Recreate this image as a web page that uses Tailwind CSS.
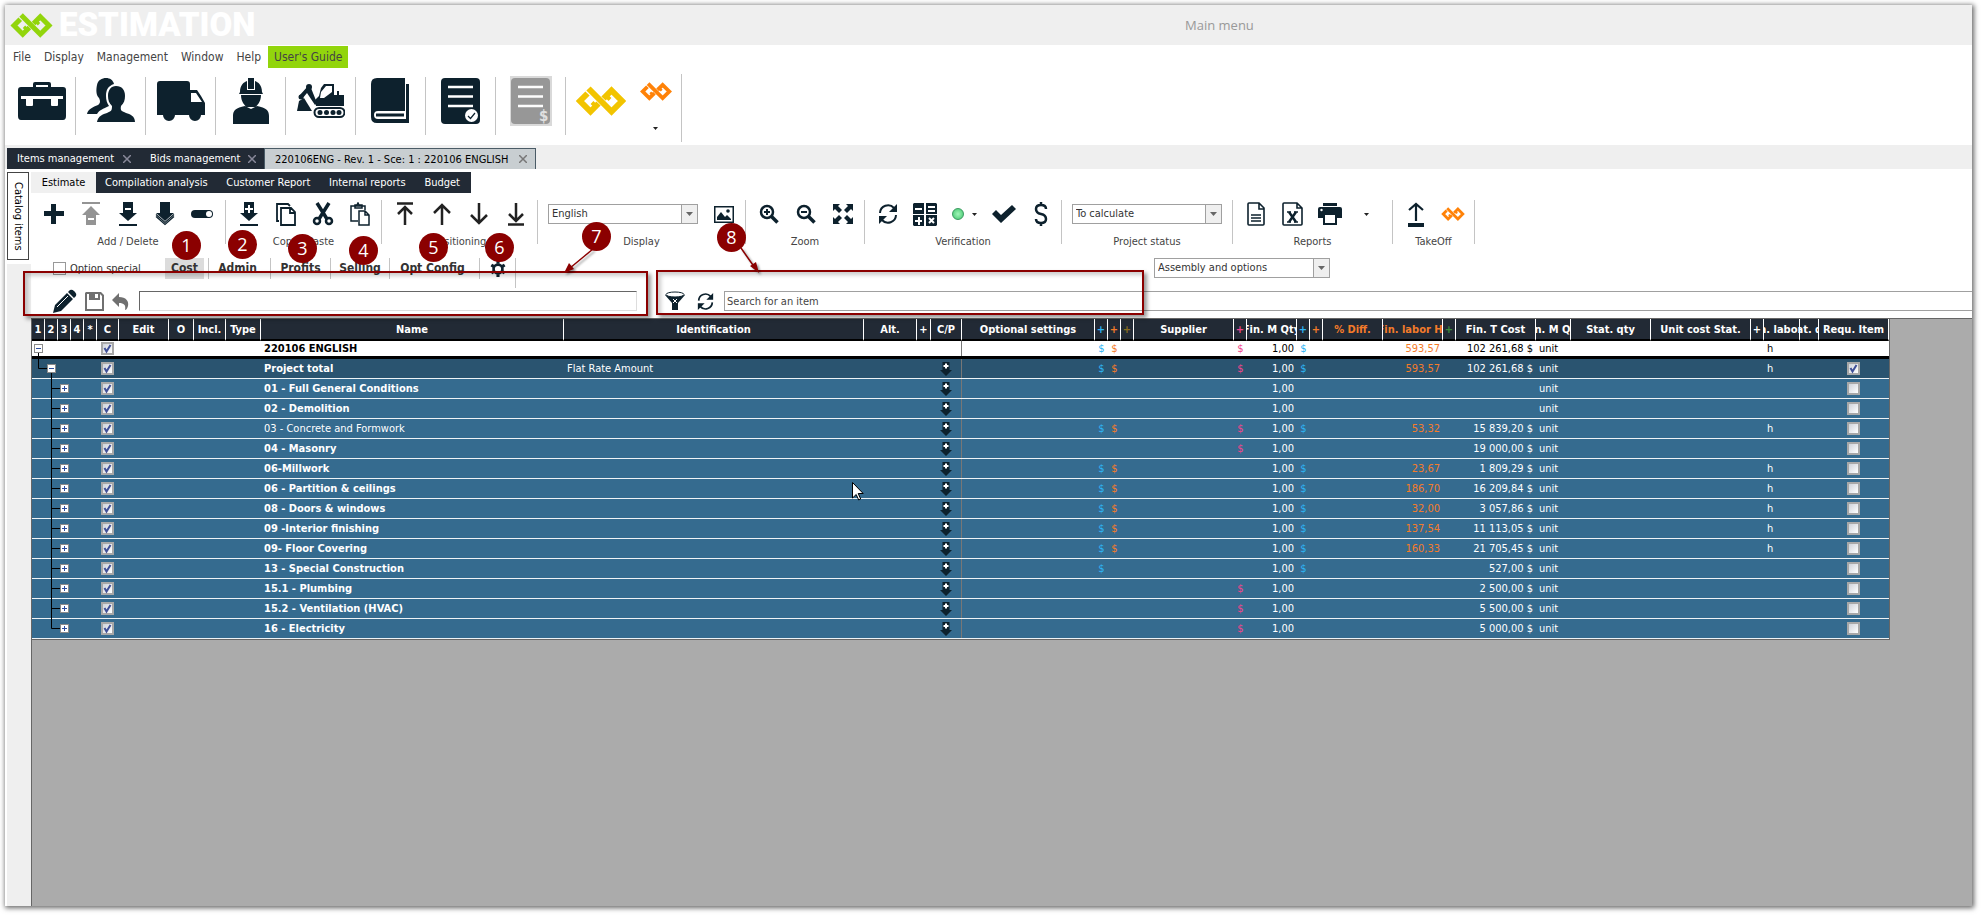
<!DOCTYPE html>
<html lang="en">
<head>
<meta charset="utf-8">
<title>Estimation</title>
<script src="https://cdn.jsdelivr.net/npm/@tailwindcss/browser@4"></script>
</head>
<body class="bg-white font-['DejaVu_Sans_Condensed','Noto_Sans',sans-serif] text-[11px] leading-4 text-[#333]">

<svg class="hidden" aria-hidden="true">
  <symbol id="logo" viewBox="0 0 50 30"><g fill="none" stroke="currentColor" stroke-width="6"><path d="M12.500 2.500L35.500 25.500L46 15L35.500 4.500L27.500 12.500"/><path d="M22.500 17.500L14.500 25.500L4 15L11.500 7.500"/><path d="M20.500 21L16 16.500M29.500 9L34 13.500" stroke-width="4"/></g></symbol>
  <symbol id="case" viewBox="0 0 48 40"><path fill-rule="evenodd" d="M15 6V3q0-2 2-2h14q2 0 2 2v3h12q3 0 3 3v26q0 4-3 4H3q-3 0-3-4V9q0-3 3-3zM18 6h12V4H18zM3 15v3h5v6q0 1 1 1h5q1 0 1-1v-6h18v6q0 1 1 1h5q1 0 1-1v-6h5v-3z"/></symbol>
  <symbol id="people" viewBox="0 0 48 44"><path d="M0 36c1-5 6-7 11-9 3-2 2-5 1-7-3-3-3-8-2-13C11 2 15 0 19 0c4 0 7 2 8 6-6 2-8 6-8 12 0 4 1 7 3 10-6 3-10 4-12 8z"/><path d="M29 8c6 0 9 4 9 10 0 4-1 7-4 10-1 5 1 5 5 7 4 1 9 3 9 9H10c1-6 6-8 10-9 4-2 5-2 5-7-3-3-4-6-4-10 0-6 3-10 8-10z"/></symbol>
  <symbol id="truck" viewBox="0 0 48 40"><path fill-rule="evenodd" d="M3 0h27q3 0 3 3v6h7l4 6 4 7v12h-4a6 6 0 0 1-12 0H18a6 6 0 0 1-12 0H0V3q0-3 3-3zM34 12v9h11l-6-9z"/></symbol>
  <symbol id="worker" viewBox="0 0 36 46"><path d="M7 14C7 7 11 4 14 3v9h8V3c3 1 7 4 7 11l1 2H6z"/><path d="M15 0h6v11h-6zM8 17h20c0 7-4 11-6 12h-8c-2-1-6-5-6-12zM12 28l6 3 6-3c9 2 12 4 12 10v8H0v-8c0-6 3-8 12-10z"/></symbol>
  <symbol id="digger" viewBox="0 0 48 36"><path fill-rule="evenodd" d="M27 1h10v11h3V8h2v4h5v11H19l-1-6 4-4 2-8zM29 3l-5 6-1 6h4l8-6V3z"/><path d="M2 13L11 3l3 2 6 15-2 2-8-12-5 6z"/><circle cx="12" cy="4" r="3"/><circle cx="4" cy="14" r="2.500"/><path d="M2 18l5-3 8 13H0z"/><path fill-rule="evenodd" d="M22 24h21a5 5 0 0 1 0 11H22a5 5 0 0 1 0-11zm0 2a3 3 0 0 0 0 7h21a3 3 0 0 0 0-7z"/><circle cx="23" cy="29.500" r="2.500"/><circle cx="29.500" cy="29.500" r="2.500"/><circle cx="36" cy="29.500" r="2.500"/><circle cx="42" cy="29.500" r="2.500"/></symbol>
  <symbol id="book" viewBox="0 0 39 46"><path fill-rule="evenodd" d="M6 0h28v33H7q-4 0-4 4t4 4h28V6h3v39H6q-6 0-6-6V6q0-6 6-6z"/><path d="M5 35.500h28v3H5z"/></symbol>
  <symbol id="sheet" viewBox="0 0 39 46"><path fill="currentColor" d="M4 0h31q4 0 4 4v38q0 4-4 4H4q-4 0-4-4V4q0-4 4-4z"/><path d="M7 9h25M7 18.500h25M7 28h25" stroke="#fff" stroke-width="2.500"/></symbol>
  <symbol id="plus" viewBox="0 0 22 22"><path d="M8 1h5v7h8v5h-8v8H8v-8H1V8h7z"/></symbol>
  <symbol id="upminus" viewBox="0 0 22 26"><path fill-rule="evenodd" d="M2 1h18v2H2zM11 5l9 9h-4v10H6V14H2zM8 17v2h6v-2z"/></symbol>
  <symbol id="downminus" viewBox="0 0 22 26"><path fill-rule="evenodd" d="M6 1h10v11h4l-9 8-9-8h4zM8 7v2h6V7zM2 23h18v2H2z"/></symbol>
  <symbol id="downstack" viewBox="0 0 22 26"><path d="M6 1h10v11h4l-9 8-9-8h4z"/><path d="M2 13.500l9 8 9-8M2 15.500l9 8 9-8" fill="none" stroke="currentColor" stroke-width="1.200"/></symbol>
  <symbol id="toggle" viewBox="0 0 24 12"><rect x="1" y="2" width="22" height="8" rx="4" fill="currentColor"/><circle cx="19" cy="6" r="3" fill="#fff"/></symbol>
  <symbol id="downplus" viewBox="0 0 22 26"><path fill-rule="evenodd" d="M6 1h10v11h4l-9 8-9-8h4zM10 4v3H7v2h3v3h2V9h3V7h-3V4zM2 23h18v2H2z"/></symbol>
  <symbol id="cp" viewBox="0 0 12 14"><path d="M2.500 0h7v8H12l-6 6-6-6h2.500z"/><path d="M6 1.500v5M3.500 4h5" stroke="#fff" stroke-width="2"/></symbol>
  <symbol id="copy" viewBox="0 0 22 24"><g fill="none" stroke="currentColor" stroke-width="1.800"><path d="M4 19H2V2h11l2 2M6 6h10l4 4v13H6zM15 6v5h5"/></g></symbol>
  <symbol id="cut" viewBox="0 0 22 24"><g fill="none" stroke="currentColor" stroke-width="2.500"><circle cx="5" cy="19" r="3"/><circle cx="17" cy="19" r="3"/><path d="M5 1l10 16M17 1L7 17" stroke-width="3.500"/></g></symbol>
  <symbol id="paste" viewBox="0 0 22 24"><g fill="none" stroke="currentColor" stroke-width="1.500"><path d="M9 19H2V4h14v4M6 6V3h2l1-2 1 2h3v3zM10 9h6l4 4v10H10zM16 9v4h4"/></g></symbol>
  <symbol id="up" viewBox="0 0 20 24"><path d="M10 23V3M2 11l8-8 8 8" fill="none" stroke="currentColor" stroke-width="2.500"/></symbol>
  <symbol id="top" viewBox="0 0 20 24"><path d="M10 23V6M3 12l7-7 7 7M2 1.500h16" fill="none" stroke="currentColor" stroke-width="2.500"/></symbol>
  <symbol id="image" viewBox="0 0 20 17"><path fill-rule="evenodd" d="M0 0h20v17H0zM1.500 1.500v14h17v-14zM3 14V11l4-5 4 5 2-2 4 4v1z"/><circle cx="14" cy="5" r="1.800"/></symbol>
  <symbol id="zin" viewBox="0 0 20 20"><g fill="none" stroke="currentColor" stroke-width="2.500"><circle cx="8" cy="8" r="6"/><path d="M12.500 12.500l6 6" stroke-width="3.500"/><path d="M8 5v6M5 8h6" stroke-width="2"/></g></symbol>
  <symbol id="zout" viewBox="0 0 20 20"><g fill="none" stroke="currentColor" stroke-width="2.500"><circle cx="8" cy="8" r="6"/><path d="M12.500 12.500l6 6" stroke-width="3.500"/><path d="M5 8h6" stroke-width="2"/></g></symbol>
  <symbol id="fit" viewBox="0 0 20 20"><path d="M0 0h7L5 2l4 4-3 3-4-4-2 2zM20 0h-7l2 2-4 4 3 3 4-4 2 2zM0 20h7l-2-2 4-4-3-3-4 4-2-2zM20 20h-7l2-2-4-4 3-3 4 4 2-2z"/></symbol>
  <symbol id="sync" viewBox="0 0 20 20"><path d="M2 9a8 8 0 0 1 14-5M18 11a8 8 0 0 1-14 5" fill="none" stroke="currentColor" stroke-width="2"/><path d="M19 0v8h-8zM1 20v-8h8z"/></symbol>
  <symbol id="calc" viewBox="0 0 24 23"><path fill-rule="evenodd" d="M1 0h10v11H0V1zM13 0h10l1 1v10H13zM0 12h11v11H1l-1-1zM13 12h11v10l-1 1H13zM2 5v2h7V5zM15 3v2h7V3zM15 7v2h7V7zM5 14v3H2v2h3v3h2v-3h2v-2H7v-3z"/><path d="M16 15l5 5M21 15l-5 5" stroke="#fff" stroke-width="2"/></symbol>
  <symbol id="tick" viewBox="0 0 24 20"><path d="M0 10l4-4 5 5L20 1l4 4L9 19z"/></symbol>
  <symbol id="money" viewBox="0 0 14 24"><path d="M12 7q0-4-5-4T2 7t5 5 5 5-5 4-5-4M7 0v3M7 21v3" fill="none" stroke="currentColor" stroke-width="2.500"/></symbol>
  <symbol id="file" viewBox="0 0 18 24"><path d="M1 2q0-1 1-1h10l5 5v16q0 1-1 1H2q-1 0-1-1zM12 1v6h5M4 13h10M4 16h10M4 19h10" fill="none" stroke="currentColor" stroke-width="1.600"/></symbol>
  <symbol id="excel" viewBox="0 0 21 24"><path d="M1 2q0-1 1-1h13l5 5v16q0 1-1 1H2q-1 0-1-1zM15 1v5h5" fill="none" stroke="currentColor" stroke-width="1.600"/><path d="M7 10l7 10M14 10L7 20" stroke="currentColor" stroke-width="2.500"/><path d="M5 10h4M12 10h4M5 20h4M12 20h4" stroke="currentColor" stroke-width="1.500"/></symbol>
  <symbol id="print" viewBox="0 0 24 22"><path fill-rule="evenodd" d="M5 0h14v3H5zM2 4h20q2 0 2 2v9h-5v7H5v-7H0V6q0-2 2-2zM7 12v8h10v-8z"/><circle cx="3.500" cy="7" r="1.200" fill="#fff"/></symbol>
  <symbol id="upload" viewBox="0 0 18 25"><path d="M9 19V2M2 8l7-6 7 6" fill="none" stroke="currentColor" stroke-width="2.200"/><path d="M1 21h16v4H1z"/></symbol>
  <symbol id="pencil" viewBox="0 0 24 24"><path d="M0 24l2-8L14 4l6 6L8 22zM15 3l2-2q2-1 4 1l1 1q2 2 1 4l-2 2z"/><path d="M4 18L15 7" stroke="#fff"/></symbol>
  <symbol id="save" viewBox="0 0 19 19"><path fill-rule="evenodd" d="M1 0h15l3 3v16H0V1zM2 2v15h15V4l-2-2v6H4V2zM10 2v4h3V2z"/></symbol>
  <symbol id="undo" viewBox="0 0 17 17"><path d="M7 0v4c7 0 10 4 9 9-1 3-2 4-3 4 1-5-1-7-6-7v4L0 7z"/></symbol>
  <symbol id="funnel" viewBox="0 0 20 20"><path d="M0 4h20l-7 8v7H7v-7z"/><ellipse cx="10" cy="3.500" rx="9" ry="2.500" fill="#fff" stroke="currentColor"/><path d="M8 8l4 4M12 8l-4 4" stroke="#fff"/></symbol>
  <symbol id="gear" viewBox="0 0 18 18"><circle cx="9" cy="9" r="5" fill="none" stroke="currentColor" stroke-width="3"/><path d="M9 0v3M9 15v3M1.500 4.500l2.500 1.500M14 12l2.500 1.500M1.500 13.500L4 12M14 6l2.500-1.500" stroke="currentColor" stroke-width="3.500"/></symbol>
</svg>

<div class="relative flex min-h-screen flex-col pt-[5px] pr-[9px] pb-[9px] pl-[5px]">
<div class="flex flex-1 flex-col overflow-hidden bg-white shadow-[1px_1px_5px_1px_rgba(0,0,0,0.6)]">

  <header class="flex h-10 items-center bg-[#efefef]">
    <svg class="ml-[5px] h-[25px] w-[43px] text-[#92d50c]"><use href="#logo"/></svg>
    <h1 class="ml-[6px] w-[201px] font-[Roboto] text-[33px] leading-10 font-black text-white">ESTIMATION</h1>
    <span class="ml-[925px] font-['Open_Sans'] text-[13px] text-[#999]">Main menu</span>
  </header>

  <nav class="flex h-6 items-start gap-[13px] pt-px pl-2 text-[12px] leading-[22px] text-[#444]">
    <a href="#">File</a><a href="#">Display</a><a href="#">Management</a><a href="#">Window</a><a href="#">Help</a>
    <a href="#" class="-ml-[6px] bg-[#92d50c] px-[6px]">User's Guide</a>
  </nav>

  <div class="flex h-[76px] items-start pt-[5px] text-[#0d212d]" role="toolbar" aria-label="Main">
    <button aria-label="Toolbox" class="my-[3px] flex h-[58px] w-[71px] items-center border-r border-[#c4c4c4] pb-[10px] pl-[13px]"><svg class="h-10 w-12 fill-current"><use href="#case"/></svg></button>
    <button aria-label="Contacts" class="my-[3px] flex h-[58px] w-[70px] items-center justify-center border-r border-[#c4c4c4] pb-3"><svg class="h-11 w-12 fill-current"><use href="#people"/></svg></button>
    <button aria-label="Suppliers" class="my-[3px] flex h-[58px] w-[70px] items-center justify-center border-r border-[#c4c4c4] pb-[10px]"><svg class="h-10 w-12 fill-current"><use href="#truck"/></svg></button>
    <button aria-label="Workers" class="my-[3px] flex h-[58px] w-[70px] items-center justify-center border-r border-[#c4c4c4] pb-[10px]"><svg class="h-[46px] w-9 fill-current"><use href="#worker"/></svg></button>
    <button aria-label="Equipment" class="my-[3px] flex h-[58px] w-[70px] items-center justify-center border-r border-[#c4c4c4] pb-[10px]"><svg class="h-9 w-12 fill-current"><use href="#digger"/></svg></button>
    <button aria-label="Catalog" class="my-[3px] flex h-[58px] w-[70px] items-center justify-center border-r border-[#c4c4c4] pb-[10px]"><svg class="h-[46px] w-[39px] fill-current"><use href="#book"/></svg></button>
    <button aria-label="Bids" class="my-[3px] flex h-[58px] w-[70px] items-center justify-center border-r border-[#c4c4c4] pb-[10px]"><span class="relative h-[46px] w-[39px]"><svg class="h-[46px] w-[39px]"><use href="#sheet"/></svg><svg class="absolute right-[2px] bottom-[2px] size-[13px]" viewBox="0 0 13 13"><circle cx="6.500" cy="6.500" r="6.500" fill="#fff"/><path d="M3 7l2.500 2.500L10 4" fill="none" stroke="#0d212d" stroke-width="1.200"/></svg></span></button>
    <button aria-label="Invoices" class="my-[3px] flex h-[58px] w-[70px] items-center justify-center border-r border-[#c4c4c4] pb-[10px]"><span class="relative flex h-[50px] w-[42px] items-center justify-center bg-[#d9d9d9] text-[#949494]"><svg class="h-[46px] w-[39px] opacity-95"><use href="#sheet"/></svg><span class="absolute right-[3px] bottom-[2px] text-[15px] font-bold text-[#e0e0e0]">$</span></span></button>
    <button aria-label="Cloud" class="flex h-[50px] w-[68px] items-center pt-1 pl-[10px]"><svg class="h-[30px] w-[50px] text-[#f2c400]"><use href="#logo"/></svg></button>
    <button aria-label="Modules" class="flex h-[68px] w-[48px] flex-col items-center border-r border-[#c4c4c4] pt-2 pr-1"><svg class="h-[19px] w-8 text-[#ff8208]"><use href="#logo"/></svg><svg class="mt-[26px] h-[3px] w-[5px] fill-[#222]" viewBox="0 0 5 3"><path d="M0 0h5L2.500 3z"/></svg></button>
  </div>

  <div class="flex h-6 items-end bg-[#efefef] pl-[2px] leading-[21px] text-white">
    <button class="flex h-[21px] w-[132px] items-center justify-between bg-[#222a35] pr-2 pl-[10px]"><span>Items management</span><svg class="size-2" viewBox="0 0 8 8"><path d="M0 0l8 8M8 0L0 8" stroke="#889" stroke-width="1.500"/></svg></button>
    <button class="flex h-[21px] w-[125px] items-center justify-between bg-[#222a35] pr-2 pl-[11px]"><span>Bids management</span><svg class="size-2" viewBox="0 0 8 8"><path d="M0 0l8 8M8 0L0 8" stroke="#889" stroke-width="1.500"/></svg></button>
    <button class="flex h-[21px] w-[272px] items-center justify-between border border-b-0 border-[#4a5b66] bg-[#c8ced1] pr-2 pl-[10px] text-black"><span>220106ENG - Rev. 1 - Sce: 1 : 220106 ENGLISH</span><svg class="size-2" viewBox="0 0 8 8"><path d="M0 0l8 8M8 0L0 8" stroke="#777" stroke-width="1.500"/></svg></button>
  </div>

  <div class="flex flex-1">
    <aside class="ml-[2px] flex w-6 flex-col bg-[#efefef]">
      <div class="bg-white pt-[3px]"><button class="h-[88px] w-[22px] border border-[#444] bg-white text-black [writing-mode:vertical-rl]">Catalog items</button></div>
    </aside>
    <main class="flex min-w-0 flex-1 flex-col">
      <div class="mt-[3px] flex h-[21px] leading-[21px] text-white" role="tablist">
        <button role="tab" class="w-[65px] bg-[#f0f0f0] text-black">Estimate</button>
        <div class="flex w-[375px] justify-between bg-[#222a35] pr-[11px] pl-[9px]"><button role="tab">Compilation analysis</button><button role="tab">Customer Report</button><button role="tab">Internal reports</button><button role="tab">Budget</button></div>
      </div>

      <div id="ribbon" class="mt-[7px] flex h-[52px] text-[#0d212d]"></div>

      <div class="flex h-8 items-start pt-[6px] text-[12px] text-[#333]">
        <label class="flex h-[21px] w-[134px] items-center gap-[4px] pl-[22px] text-[11px]"><input type="checkbox" class="size-[13px] appearance-none border border-[#999] bg-white">Option special</label>
        <div class="flex h-[21px] leading-[21px] font-bold">
          <button class="w-[39px] bg-[#dcdcdc]">Cost</button>
          <span class="ml-[4px] border-l border-[#c4c4c4]"></span><button class="w-[61px] pr-1">Admin</button>
          <span class="border-l border-[#c4c4c4]"></span><button class="w-[59px]">Profits</button>
          <span class="border-l border-[#c4c4c4]"></span><button class="w-[58px]">Selling</button>
          <span class="border-l border-[#c4c4c4]"></span><button class="w-[89px] pr-1">Opt Config</button>
          <span class="border-l border-[#c4c4c4]"></span><button aria-label="Settings" class="flex w-[35px] items-center justify-center"><svg class="size-4 text-[#0d212d]"><use href="#gear"/></svg></button>
          <span class="h-[30px] border-l border-[#c4c4c4]"></span>
        </div>
        <div class="relative ml-[638px] h-5 w-[176px] border border-[#a0a0a0] text-[11px]">
          <select aria-label="View" class="size-full appearance-none pl-[3px]"><option>Assembly and options</option></select>
          <span class="pointer-events-none absolute inset-y-0 right-0 flex w-4 items-center justify-center border-l border-[#a0a0a0] bg-[#efefef]"><svg class="h-1 w-[7px] fill-[#666]" viewBox="0 0 7 4"><path d="M0 0h7L3.500 4z"/></svg></span>
        </div>
      </div>

      <div class="flex h-[34px] items-center text-[#0d212d]">
        <button aria-label="Edit" class="ml-[22px]"><svg class="size-6 fill-current"><use href="#pencil"/></svg></button>
        <button aria-label="Save" class="ml-2 text-[#707070]"><svg class="size-[19px] fill-current"><use href="#save"/></svg></button>
        <button aria-label="Undo" class="ml-2 text-[#707070]"><svg class="size-[17px] fill-current"><use href="#undo"/></svg></button>
        <input aria-label="Formula" class="ml-[10px] h-5 w-[498px] border border-t-[#666] border-r-[#ddd] border-b-[#ddd] border-l-[#666]">
        <button aria-label="Filter" class="ml-[28px]"><svg class="size-5 fill-current"><use href="#funnel"/></svg></button>
        <button aria-label="Refresh" class="ml-3"><svg class="size-[17px] fill-current"><use href="#sync"/></svg></button>
        <input aria-label="Search" value="Search for an item" class="ml-[10px] h-5 min-w-0 flex-1 border border-r-0 border-[#a0a0a0] px-[2px] text-[#444]">
      </div>

      <div class="flex-1 border-t border-l border-[#666] bg-[#ababab]">
        <table class="w-[1858px] table-fixed border-separate border-spacing-0 border-r border-b border-[#666] text-white">
          <colgroup id="cols"></colgroup>
          <thead><tr id="head" class="h-[22px]"></tr></thead>
          <tbody id="body"></tbody>
        </table>
      </div>
    </main>
  </div>
</div>

<!-- Numbered call-outs lying over the window -->
<div class="pointer-events-none absolute top-[271px] left-[23px] h-[45px] w-[625px] border-2 border-[#8b0000] shadow-[3px_3px_4px_rgba(0,0,0,0.4),inset_3px_3px_4px_rgba(0,0,0,0.2)]"></div>
<div class="pointer-events-none absolute top-[270px] left-[656px] h-[45px] w-[488px] border-2 border-[#8b0000] shadow-[3px_3px_4px_rgba(0,0,0,0.4),inset_3px_3px_4px_rgba(0,0,0,0.2)]"></div>
<svg class="pointer-events-none absolute top-[240px] left-[560px] h-10 w-[210px] fill-[#8b0000] drop-shadow-[2px_2px_1px_rgba(0,0,0,0.4)]" viewBox="0 0 210 40"><path d="M33 9L10 28M181 8l14 20" stroke="#8b0000" stroke-width="1.500"/><path d="M4 33l5-10 5 6zM199 33l-9-7 6-4z"/></svg>
<div class="text-[18px] leading-[29px] text-white font-['Open_Sans']">
  <span class="absolute top-[231px] left-[172px] size-[29px] rounded-full bg-[#8b0000] text-center">1</span>
  <span class="absolute top-[230px] left-[228px] size-[29px] rounded-full bg-[#8b0000] text-center">2</span>
  <span class="absolute top-[234px] left-[288px] size-[29px] rounded-full bg-[#8b0000] text-center">3</span>
  <span class="absolute top-[236px] left-[349px] size-[29px] rounded-full bg-[#8b0000] text-center">4</span>
  <span class="absolute top-[233px] left-[419px] size-[29px] rounded-full bg-[#8b0000] text-center">5</span>
  <span class="absolute top-[233px] left-[485px] size-[29px] rounded-full bg-[#8b0000] text-center">6</span>
  <span class="absolute top-[222px] left-[582px] size-[29px] rounded-full bg-[#8b0000] text-center">7</span>
  <span class="absolute top-[223px] left-[717px] size-[29px] rounded-full bg-[#8b0000] text-center">8</span>
</div>
<svg class="pointer-events-none absolute top-[482px] left-[852px] h-[19px] w-3" viewBox="0 0 12 19"><path d="M.5.500v15.500l3.700-3.500 2.500 5.500 2-1-2.500-5.500h5z" fill="#fff" stroke="#000"/></svg>
</div>

<script>
const btn = (id, label, cls = 'size-5') => `<button aria-label="${label}" class="flex w-[37px] items-center justify-center"><svg class="${cls} fill-current"><use href="#${id}"/></svg></button>`;
const arrow = '<svg class="h-[3px] w-[5px] fill-[#222]" viewBox="0 0 5 3"><path d="M0 0h5L2.500 3z"/></svg>';
const combo = (label, value) => `<div class="relative ml-[6px] h-5 w-[150px] border border-[#a0a0a0] text-[#333]"><select aria-label="${label}" class="size-full appearance-none pl-[3px]"><option>${value}</option></select><span class="pointer-events-none absolute inset-y-0 right-0 flex w-4 items-center justify-center border-l border-[#a0a0a0] bg-[#efefef]"><svg class="h-1 w-[7px] fill-[#666]" viewBox="0 0 7 4"><path d="M0 0h7L3.500 4z"/></svg></span></div>`;
const group = (width, label, html) => `<div class="flex shrink-0 flex-col ${width}"><div class="flex h-[44px] flex-col border-r border-[#c4c4c4]"><div class="flex h-7 shrink-0 items-center pl-1">${html}</div><div class="pt-[6px] text-center text-[#444]">${label}</div></div></div>`;
document.getElementById('ribbon').innerHTML =
  group('w-[195px]', 'Add / Delete', btn('plus','Add','size-[22px]') + btn('upminus','Remove above','h-[26px] w-[22px] text-[#949494]') + btn('downminus','Remove below','h-[26px] w-[22px]') + btn('downstack','Add several','h-[26px] w-[22px]') + btn('toggle','Toggle','h-3 w-6')) +
  group('w-[156px]', 'Copy / Paste', btn('downplus','Insert','h-[26px] w-[22px]') + btn('copy','Copy','h-6 w-[22px]') + btn('cut','Cut','h-6 w-[22px]') + btn('paste','Paste','h-6 w-[22px]')) +
  group('w-[156px]', 'Positioning', btn('top','Move to top','h-6 w-5 text-[#222]') + btn('up','Move up','h-6 w-5 text-[#222]') + btn('up','Move down','h-6 w-5 rotate-180 text-[#222]') + btn('top','Move to bottom','h-6 w-5 rotate-180 text-[#222]')) +
  group('w-[208px]', 'Display', combo('Language','English') + '<span class="w-[7px]"></span>' + btn('image','Picture','h-[17px] w-5')) +
  group('w-[119px]', 'Zoom', btn('zin','Zoom in') + btn('zout','Zoom out') + btn('fit','Fit')) +
  group('w-[197px]', 'Verification', btn('sync','Refresh') + btn('calc','Calculate','h-[23px] w-6') + `<button aria-label="Status" class="flex w-[42px] items-center justify-center gap-2"><span class="size-3 rounded-full border border-[#3a9a60] bg-radial from-[#a0f5b8] to-[#35c56c]"></span>${arrow}</button>` + btn('tick','Validate','h-5 w-6') + btn('money','Price','h-6 w-[14px]')) +
  group('w-[171px]', 'Project status', combo('Project status','To calculate')) +
  group('w-[160px]', 'Reports', btn('file','Report','h-6 w-[18px]') + btn('excel','Excel','h-6 w-[21px]') + btn('print','Print','h-[22px] w-6') + `<button aria-label="More" class="flex w-[37px] items-center justify-center">${arrow}</button>`) +
  group('w-[82px]', 'TakeOff', btn('upload','Upload','h-[25px] w-[18px]') + btn('logo','TakeOff','h-[14px] w-6 text-[#ff8208]').replace('fill-current', ''));

const W='text-white', B='text-[#2eb4f5]', O='text-[#f47b2a]', Y='text-[#8a6d1f]', P='text-[#f0468c]', G='text-[#3a8a3a]';
const cols = [[13,'1',W],[13,'2',W],[13,'3',W],[13,'4',W],[13,'*',W],[22,'C',W],[50,'Edit',W],[25,'O',W],[32,'Incl.',W],[35,'Type',W],[303,'Name',W],[300,'Identification',W],[53,'Alt.',W],[14,'+',W],[31,'C/P',W],[133,'Optional settings',W],[13,'+',B],[13,'+',O],[13,'+',Y],[100,'Supplier',W],[13,'+',P],[50,'Fin. M Qty',W],[13,'+',B],[13,'+',O],[60,'% Diff.',O],[60,'Fin. labor Hr',O],[13,'+',G],[80,'Fin. T Cost',W],[35,'Fin. M Qty',W],[80,'Stat. qty',W],[100,'Unit cost Stat.',W],[13,'+',W],[36,'Fin. labor U',W],[19,'Stat. qty',W],[70,'Requ. Item',W]];
document.getElementById('cols').innerHTML = cols.map(c => `<col style="width:${c[0]}px">`).join('') ;
document.getElementById('head').innerHTML = cols.map(c => `<th class="h-[22px] overflow-hidden border-r border-b-2 border-r-white border-b-black bg-[#222a35] p-0 ${c[2]}"><div class="flex justify-center overflow-hidden pt-px whitespace-nowrap">${c[1]}</div></th>`).join('');

const check = (on, label) => `<span class="relative mx-auto block size-[13px]"><input type="checkbox" aria-label="${label}" ${on ? 'checked' : ''} class="block size-[13px] appearance-none border-2 border-[#a8a8a8] bg-linear-to-br from-[#cfd3da] to-white">${on ? '<svg class="pointer-events-none absolute inset-0" viewBox="0 0 13 13"><path d="M3.500 6l2 3.500L9.500 3" fill="none" stroke="#3f4f97" stroke-width="2"/></svg>' : ''}</span>`;
const box = (x, y, plus) => `<rect x="${x-4}" y="${y-4}" width="8" height="8" fill="#fff" stroke="#8a8a8a"/><path d="M${x-2.5} ${y}h5${plus ? `M${x} ${y-2.5}v5` : ''}" stroke="#2c4c9c"/>`;
const rows = [
 ['220106 ENGLISH','',1,1,1,1,'593,57','102 261,68 $','unit','h'],
 ['Project total','Flat Rate Amount',1,1,1,1,'593,57','102 261,68 $','unit','h'],
 ['01 - Full General Conditions','',0,0,0,0,'','','unit',''],
 ['02 - Demolition','',0,0,0,0,'','','unit',''],
 ['03 - Concrete and Formwork','',1,1,1,1,'53,32','15 839,20 $','unit','h'],
 ['04 - Masonry','',0,0,1,0,'','19 000,00 $','unit',''],
 ['06-Millwork','',1,1,0,1,'23,67','1 809,29 $','unit','h'],
 ['06 - Partition &amp; ceilings','',1,1,0,1,'186,70','16 209,84 $','unit','h'],
 ['08 - Doors &amp; windows','',1,1,0,1,'32,00','3 057,86 $','unit','h'],
 ['09 -Interior finishing','',1,1,0,1,'137,54','11 113,05 $','unit','h'],
 ['09- Floor Covering','',1,1,0,1,'160,33','21 705,45 $','unit','h'],
 ['13 - Special Construction','',1,0,0,1,'','527,00 $','unit',''],
 ['15.1 - Plumbing','',0,0,1,0,'','2 500,00 $','unit',''],
 ['15.2 - Ventilation (HVAC)','',0,0,1,0,'','5 500,00 $','unit',''],
 ['16 - Electricity','',0,0,1,0,'','5 000,00 $','unit','']];
document.getElementById('body').innerHTML = rows.map((r, i) => {
  const last = i === rows.length - 1;
  const tree = i === 0 ? '<path d="M6.500 8v10" stroke="#000"/>' + box(6.5,7.5,false)
    : i === 1 ? '<path d="M6.500 0v9.500h13v10.500" fill="none" stroke="#000"/>' + box(19.5,9.5,false)
    : `<path d="M19.500 0v${last ? 9.5 : 20}M19.500 9.500h13" stroke="#000"/>` + box(32.5,9.5,true);
  const h = i === 0 ? 'h-[18px]' : 'h-5';
  const cell = i === 0 ? 'border-b-[3px] [border-bottom-style:solid] border-black p-0' : 'border-b border-[#eef3f6] p-0';
  const row = i === 0 ? 'bg-white text-black leading-[15px]' : i === 1 ? 'bg-[#2a5470] leading-[19px]' : 'bg-[#356b8f] leading-[19px]';
  const d = (on, color) => `<td class="${cell} text-center ${color}">${on ? '$' : ''}</td>`;
  const e = n => `<td colspan="${n}" class="${cell}"></td>`;
  return `<tr class="${h} ${row} whitespace-nowrap">
   <td colspan="5" class="${cell}"><svg class="block ${i === 0 ? 'h-[15px]' : 'h-[19px]'} w-[65px] overflow-visible">${tree}</svg></td>
   <td class="${cell}"><div class="pr-[2px]">${check(true, 'Include ' + r[0])}</div></td>${e(4)}
   <td class="${cell} pl-[3px] ${i === 4 ? 'font-normal' : 'font-bold'}">${r[0]}</td><td class="${cell} pl-[3px]">${r[1]}</td>${e(2)}
   <td class="${cell}"><div class="flex h-full items-center justify-center border-r border-r-[#777] text-[#0d212d] ${i === 0 ? 'min-h-[15px]' : 'min-h-[19px]'}">${i ? '<svg class="h-[14px] w-3 fill-current"><use href="#cp"/></svg>' : ''}</div></td>${e(1)}
   ${d(r[2],B)}${d(r[3],O)}${e(2)}${d(r[4],P)}<td class="${cell} pr-[3px] text-right">1,00</td>${d(r[5],B)}${e(2)}
   <td class="${cell} pr-[3px] text-right ${O}">${r[6]}</td>${e(1)}<td class="${cell} pr-[3px] text-right">${r[7]}</td><td class="${cell} pl-[3px]">${r[8]}</td>${e(3)}
   <td class="${cell} pl-[3px]">${r[9]}</td>${e(1)}<td class="${cell}"><div class="pr-[2px]">${i ? check(i === 1, 'Required ' + r[0]) : ''}</div></td></tr>`;
}).join('');
</script>
</body>
</html>
